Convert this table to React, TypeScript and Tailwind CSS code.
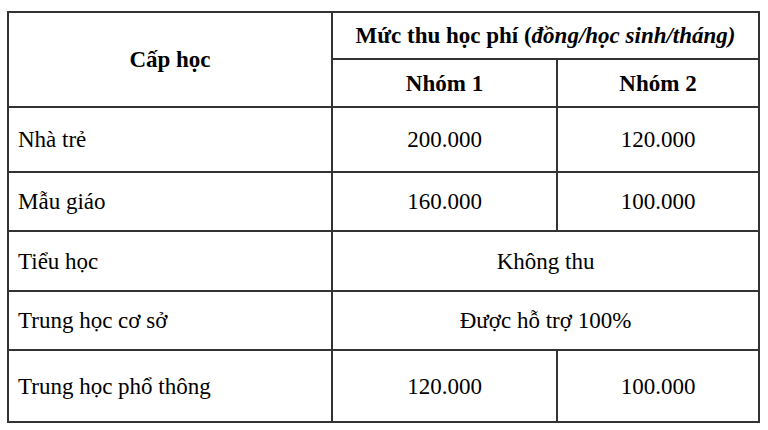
const rows: { name: string; a: string; b?: string; h: string }[] = [
  { name: "Nhà trẻ", a: "200.000", b: "120.000", h: "h-[65px]" },
  { name: "Mẫu giáo", a: "160.000", b: "100.000", h: "h-[59px]" },
  { name: "Tiểu học", a: "Không thu", h: "h-[60px]" },
  { name: "Trung học cơ sở", a: "Được hỗ trợ 100%", h: "h-[59px]" },
  { name: "Trung học phổ thông", a: "120.000", b: "100.000", h: "h-[72px]" },
];

const cell = "border-2 border-[#333]";

export default function App() {
  return (
    <div className="h-[430px] w-[768px] bg-white pl-[7px] pt-[11px] font-['Liberation_Serif'] text-[23px] leading-none text-black">
      <table className="w-[751px] table-fixed border-collapse border-2 border-[#333]">
        <colgroup>
          <col className="w-[324px]" />
          <col className="w-[225px]" />
          <col className="w-[202px]" />
        </colgroup>
        <thead>
          <tr className="h-[47px]">
            <th rowSpan={2} className={`${cell} text-center font-bold`}>
              Cấp học
            </th>
            <th colSpan={2} className={`${cell} text-center font-bold`}>
              Mức thu học phí (<i>đồng/học sinh/tháng)</i>
            </th>
          </tr>
          <tr className="h-[48px]">
            <th className={`${cell} text-center font-bold`}>Nhóm 1</th>
            <th className={`${cell} text-center font-bold`}>Nhóm 2</th>
          </tr>
        </thead>
        <tbody>
          {rows.map((r) => (
            <tr key={r.name} className={r.h}>
              <td className={`${cell} px-[9px] text-left`}>{r.name}</td>
              {r.b ? (
                <>
                  <td className={`${cell} text-center`}>{r.a}</td>
                  <td className={`${cell} text-center`}>{r.b}</td>
                </>
              ) : (
                <td colSpan={2} className={`${cell} text-center`}>
                  {r.a}
                </td>
              )}
            </tr>
          ))}
        </tbody>
      </table>
    </div>
  );
}
